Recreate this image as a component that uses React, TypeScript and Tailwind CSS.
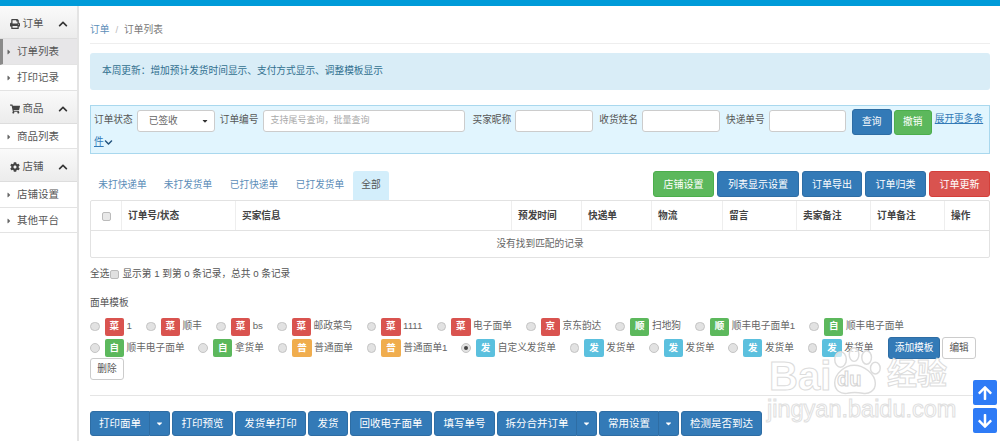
import { FaArrowDown, FaArrowUp, FaCaretDown, FaCaretRight, FaChevronDown, FaChevronUp, FaCog, FaPrint, FaShoppingCart } from "react-icons/fa";
import type { ReactNode } from "react";

const font = "font-['Liberation_Sans','Noto_Sans_CJK_SC',sans-serif]";

function SideHead({ icon, label }: { icon: ReactNode; label: string }) {
  return (
    <div className="flex h-[33px] items-center justify-center border-b border-[#ddd] bg-gradient-to-b from-[#fafafa] to-[#ececec] pt-[3px] text-[10.5px] text-[#555]">
      {icon}
      <span className="ml-[3px]">{label}</span>
      <FaChevronUp className="ml-[14px] text-[10px] text-[#333]" />
    </div>
  );
}

function SideItem({ label, active, h = "h-[26px]" }: { label: string; active?: boolean; h?: string }) {
  return (
    <div className={`flex items-center border-b border-[#e3e3e3] pt-[1px] text-[10.5px] text-[#555] ${h} ${active ? "border-l-[3px] border-l-[#8a8a8a] bg-[#e7e6e8] pl-[2px]" : "pl-[5px]"}`}>
      <FaCaretRight className="mr-[4px] text-[8px] text-[#666]" />
      {label}
    </div>
  );
}

function Btn({ label, color = "blue", className = "" }: { label: string; color?: "blue" | "green" | "red"; className?: string }) {
  const bg = color === "blue" ? "border-[#2e6da4] bg-[#337ab7]" : color === "green" ? "border-[#4cae4c] bg-[#5cb85c]" : "border-[#d43f3a] bg-[#d9534f]";
  return <div className={`flex shrink-0 items-center justify-center whitespace-nowrap rounded-[3px] border text-white ${bg} ${className}`}>{label}</div>;
}

function SplitBtn({ label, w }: { label: string; w: string }) {
  return (
    <div className="flex h-[25px] text-[10.5px] text-white">
      <div className={`flex items-center justify-center rounded-l-[3px] border border-[#2e6da4] bg-[#337ab7] ${w}`}>{label}</div>
      <div className="flex w-[20px] items-center justify-center rounded-r-[3px] border border-l-0 border-[#2e6da4] bg-[#337ab7]">
        <FaCaretDown className="text-[9px]" />
      </div>
    </div>
  );
}

const badgeColors = {
  red: "bg-[#d9534f]",
  green: "bg-[#5cb85c]",
  orange: "bg-[#f0ad4e]",
  blue: "bg-[#5bc0de]",
};

type Tpl = { b: string; c: keyof typeof badgeColors; t: string; checked?: boolean };

function Template({ b, c, t, checked }: Tpl) {
  return (
    <div className="flex shrink-0 items-center">
      <span className="flex h-[9.5px] w-[9.5px] items-center justify-center rounded-full border border-[#c4c4c4] bg-[#e2e2e2]">
        {checked && <span className="h-[4px] w-[4px] rounded-full bg-[#444]" />}
      </span>
      <span className={`ml-[5px] flex h-[18px] w-[19.5px] items-center justify-center rounded-[2px] text-[9.5px] font-bold text-white ${badgeColors[c]}`}>{b}</span>
      <span className="ml-[2.5px] text-[#666]">{t}</span>
    </div>
  );
}

const row1: Tpl[] = [
  { b: "菜", c: "red", t: "1" },
  { b: "菜", c: "red", t: "顺丰" },
  { b: "菜", c: "red", t: "bs" },
  { b: "菜", c: "red", t: "邮政菜鸟" },
  { b: "菜", c: "red", t: "1111" },
  { b: "菜", c: "red", t: "电子面单" },
  { b: "京", c: "red", t: "京东韵达" },
  { b: "顺", c: "green", t: "扫地狗" },
  { b: "顺", c: "green", t: "顺丰电子面单1" },
  { b: "自", c: "green", t: "顺丰电子面单" },
];

const row2: Tpl[] = [
  { b: "自", c: "green", t: "顺丰电子面单" },
  { b: "自", c: "green", t: "拿货单" },
  { b: "普", c: "orange", t: "普通面单" },
  { b: "普", c: "orange", t: "普通面单1" },
  { b: "发", c: "blue", t: "自定义发货单", checked: true },
  { b: "发", c: "blue", t: "发货单" },
  { b: "发", c: "blue", t: "发货单" },
  { b: "发", c: "blue", t: "发货单" },
  { b: "发", c: "blue", t: "发货单" },
];

const columns = [
  { t: "", w: "w-[31px]" },
  { t: "订单号/状态", w: "w-[114px]" },
  { t: "买家信息", w: "w-[276px]" },
  { t: "预发时间", w: "w-[70px]" },
  { t: "快递单", w: "w-[70px]" },
  { t: "物流", w: "w-[71px]" },
  { t: "留言", w: "w-[74px]" },
  { t: "卖家备注", w: "w-[74px]" },
  { t: "订单备注", w: "w-[74px]" },
  { t: "操作", w: "" },
];

function Filter({ label, w, ml }: { label: string; w: string; ml: string }) {
  return (
    <>
      <span className={`${ml} mt-[4px] shrink-0 whitespace-nowrap`}>{label}</span>
      <div className={`ml-[4px] mt-[1px] h-[22px] shrink-0 rounded-[3px] border border-[#ccc] bg-white ${w}`} />
    </>
  );
}

export default function App() {
  return (
    <div className={`relative h-[441px] w-full overflow-hidden bg-white ${font}`}>
      <div className="h-[6px] bg-[#009bd9]" />
      <div className="flex h-[435px]">
        <aside className="w-[79px] shrink-0 border-r-2 border-[#e4e4e4] bg-white">
          <SideHead icon={<FaPrint className="text-[10px] text-[#444]" />} label="订单" />
          <SideItem label="订单列表" active />
          <SideItem label="打印记录" />
          <SideHead icon={<FaShoppingCart className="text-[10px] text-[#444]" />} label="商品" />
          <SideItem label="商品列表" h="h-[25px]" />
          <SideHead icon={<FaCog className="text-[10px] text-[#444]" />} label="店铺" />
          <SideItem label="店铺设置" />
          <SideItem label="其他平台" h="h-[25px]" />
        </aside>

        <main className="min-w-0 flex-1 pl-[11px] pr-[10px] text-[9.7px] text-[#555]">
          <div className="flex h-[38px] items-center gap-[6px] border-b border-[#eee] pt-[12px]">
            <span className="text-[#5b8db8]">订单</span>
            <span className="text-[#bbb]">/</span>
            <span className="text-[#777]">订单列表</span>
          </div>

          <div className="mt-[9px] flex h-[37px] items-center rounded-[3px] bg-[#d9edf7] pl-[12px] text-[#31708f]">
            本周更新：增加预计发货时间显示、支付方式显示、调整模板显示
          </div>

          <div className="mt-[15px] h-[49px] border border-[#a9d8ee] bg-[#e1f5fe] pl-[3px] pt-[3px]">
            <div className="flex h-[26px] items-start">
              <span className="mt-[4px] shrink-0 whitespace-nowrap">订单状态</span>
              <div className="ml-[4px] mt-[1px] flex h-[22px] w-[78px] shrink-0 items-center justify-between rounded-[3px] border border-[#ccc] bg-white pl-[11px] pr-[5px] text-[#666]">
                已签收
                <FaCaretDown className="text-[8px] text-[#333]" />
              </div>
              <span className="ml-[5px] mt-[4px] shrink-0 whitespace-nowrap">订单编号</span>
              <div className="ml-[4px] mt-[1px] flex h-[22px] w-[202px] shrink-0 items-center rounded-[3px] border border-[#ccc] bg-white pl-[7px] text-[9px] text-[#aaa]">
                支持尾号查询，批量查询
              </div>
              <Filter label="买家昵称" w="w-[78px]" ml="ml-[8px]" />
              <Filter label="收货姓名" w="w-[78px]" ml="ml-[6px]" />
              <Filter label="快递单号" w="w-[77px]" ml="ml-[6px]" />
              <Btn label="查询" className="ml-[6px] h-[26px] w-[40px]" />
              <Btn label="撤销" color="green" className="ml-[2px] mt-[1px] h-[25px] w-[38px]" />
              <span className="ml-[3px] mt-[3px] shrink-0 whitespace-nowrap text-[#337ab7] underline">展开更多条</span>
            </div>
            <div className="flex items-center text-[#337ab7]">
              <span className="underline">件</span>
              <FaChevronDown className="text-[9px] text-[#23527c]" />
            </div>
          </div>

          <div className="mt-[17px] flex h-[29px] items-start justify-between">
            <div className="flex h-[29px] items-stretch text-[#5b8db8]">
              <div className="flex w-[65px] items-center justify-center">未打快递单</div>
              <div className="flex w-[66px] items-center justify-center">未打发货单</div>
              <div className="flex w-[66px] items-center justify-center">已打快递单</div>
              <div className="flex w-[66px] items-center justify-center">已打发货单</div>
              <div className="flex w-[36px] items-center justify-center rounded-t-[3px] bg-[#d3eefb] text-[#555]">全部</div>
            </div>
            <div className="flex gap-[3px] text-[10px]">
              <Btn label="店铺设置" color="green" className="h-[26px] w-[61px]" />
              <Btn label="列表显示设置" className="h-[26px] w-[82px]" />
              <Btn label="订单导出" className="h-[26px] w-[60px]" />
              <Btn label="订单归类" className="h-[26px] w-[61px]" />
              <Btn label="订单更新" color="red" className="h-[26px] w-[61px]" />
            </div>
          </div>

          <div className="rounded-[2px] border border-[#e2e2e2]">
            <div className="flex h-[30px] items-center border-b border-[#e2e2e2] font-bold text-[#444]">
              {columns.map((c, i) => (
                <div key={i} className={`flex h-full items-center border-r border-[#eee] pl-[6px] pt-[1px] last:flex-1 last:border-r-0 ${c.w}`}>
                  {i === 0 && <span className="ml-[5px] h-[9px] w-[9px] rounded-[2px] border border-[#bbb] bg-[#e8e8e8]" />}
                  {c.t}
                </div>
              ))}
            </div>
            <div className="flex h-[26px] items-center justify-center text-[#666]">没有找到匹配的记录</div>
          </div>

          <div className="mt-[9px] flex items-center">
            全选
            <span className="ml-[1px] h-[9px] w-[9px] rounded-[2px] border border-[#bbb] bg-[#e0e0e0]" />
            <span className="ml-[3px]">显示第 1 到第 0 条记录，总共 0 条记录</span>
          </div>

          <div className="mt-[14px]">面单模板</div>

          <div className="mt-[7px] flex h-[19px] items-center gap-[14.2px]">
            {row1.map((t, i) => (
              <Template key={i} {...t} />
            ))}
          </div>
          <div className="mt-[2px] flex h-[20px] items-center gap-[13.8px]">
            {row2.map((t, i) => (
              <Template key={i} {...t} />
            ))}
            <div className="ml-[1px] flex">
              <Btn label="添加模板" className="h-[22px] w-[52px]" />
              <div className="ml-[2px] flex h-[22px] w-[34px] items-center justify-center rounded-[3px] border border-[#ccc] bg-white">编辑</div>
            </div>
          </div>
          <div className="flex h-[22px] w-[34px] items-center justify-center rounded-[3px] border border-[#ccc] bg-white">删除</div>

          <div className="mt-[15px] border-t border-[#e5e5e5]" />

          <div className="mt-[15px] flex gap-[2px]">
            <SplitBtn label="打印面单" w="w-[60px]" />
            <Btn label="打印预览" className="h-[25px] w-[61px] text-[10.5px]" />
            <Btn label="发货单打印" className="h-[25px] w-[71px] text-[10.5px]" />
            <Btn label="发货" className="h-[25px] w-[40px] text-[10.5px]" />
            <Btn label="回收电子面单" className="h-[25px] w-[82px] text-[10.5px]" />
            <Btn label="填写单号" className="h-[25px] w-[61px] text-[10.5px]" />
            <SplitBtn label="拆分合并订单" w="w-[80px]" />
            <SplitBtn label="常用设置" w="w-[60px]" />
            <Btn label="检测是否到达" className="h-[25px] w-[81px] text-[10.5px]" />
          </div>
        </main>
      </div>

      {/* 百度经验水印 */}
      <div className="pointer-events-none absolute left-[767px] top-[345px] h-[80px] w-[180px]">
        <span className="absolute left-[2px] top-[11px] text-[40px] font-bold leading-none text-transparent [-webkit-text-stroke:1px_#dcdcdc]">Bai</span>
        <svg viewBox="0 0 60 50" className="absolute left-[60px] top-[2px] h-[50px] w-[58px]" fill="#fff" fillOpacity="0.65" stroke="#dcdcdc" strokeWidth="1.5">
          <ellipse cx="14" cy="12" rx="6" ry="8" />
          <ellipse cx="28" cy="7" rx="5" ry="7" />
          <ellipse cx="41" cy="10" rx="5" ry="7" />
          <ellipse cx="50" cy="21" rx="5" ry="6" />
          <path d="M8 36c0-9 10-18 20-18s22 9 22 19c0 8-7 11-13 10-6-1-11-1-16 0-7 1-13-3-13-11z" />
        </svg>
        <span className="absolute left-[70px] top-[24px] text-[20px] font-bold leading-none text-transparent [-webkit-text-stroke:1px_#d4d4d4]">du</span>
        <span className="absolute left-[120px] top-[14px] text-[30px] font-bold leading-none text-transparent [-webkit-text-stroke:1px_#dcdcdc]">经验</span>
        <span className="absolute left-0 top-[53px] text-[23.5px] leading-none text-transparent [-webkit-text-stroke:1px_#e0e0e0]">jingyan.baidu.com</span>
      </div>

      <div className="absolute left-[973px] top-[380px] flex h-[25px] w-[24px] items-center justify-center rounded-[2px] bg-[#2e7bf6] text-white">
        <FaArrowUp className="text-[16px]" />
      </div>
      <div className="absolute left-[973px] top-[408px] flex h-[25px] w-[24px] items-center justify-center rounded-[2px] bg-[#2e7bf6] text-white">
        <FaArrowDown className="text-[16px]" />
      </div>
    </div>
  );
}
